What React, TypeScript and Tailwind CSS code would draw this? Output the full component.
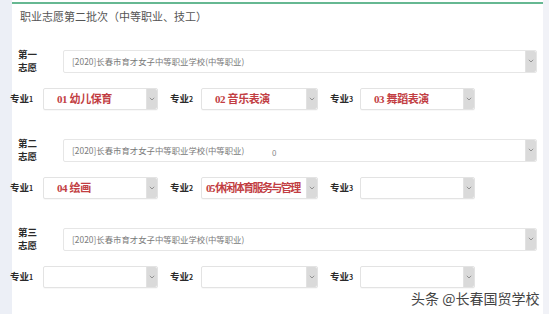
import React from "react";

const sans = "font-['Noto_Sans_CJK_SC','Noto_Sans',sans-serif]";

function Arrow() {
  return (
    <div className="flex w-[11px] shrink-0 items-center justify-center self-stretch rounded-r-[2px] border-l border-[#e2e2e2] bg-[#dadada]">
      <svg width="6" height="4" viewBox="0 0 6 4">
        <path d="M0.8 0.8 L3 3 L5.2 0.8" stroke="#8a8a8a" strokeWidth="0.9" fill="none" />
      </svg>
    </div>
  );
}

function MajorSel({ w, text, small }: { w: string; text?: string; small?: boolean }) {
  return (
    <div className={`flex h-[22px] ${w} items-stretch rounded-[2px] border border-[#e3e3e3] bg-white shadow-[0_1px_1px_rgba(0,0,0,0.03)]`}>
      <div className="flex min-w-0 flex-1 items-center overflow-hidden whitespace-nowrap">
        {text ? (
          <span
            className={`font-['Liberation_Serif','Noto_Sans_CJK_SC',serif] font-bold text-[#c23e43] ${
              small ? "pl-[4px] text-[11px] tracking-[-1.6px]" : "pl-[13px] text-[11px] tracking-[-0.4px]"
            }`}
          >
            {text}
          </span>
        ) : null}
      </div>
      <Arrow />
    </div>
  );
}

function MajorLabel({ n, w }: { n: string; w: string }) {
  return (
    <div className={`${w} shrink-0 ${sans} text-[9.5px] font-bold leading-none text-[#2a2a2a]`}>
      专业<span className="text-[7px]">{n}</span>
    </div>
  );
}

function Section({
  order,
  majors,
  zero,
}: {
  order: string;
  majors: [string?, string?, string?];
  zero?: boolean;
}) {
  return (
    <div className="flex flex-col">
      <div className="flex h-[22px] items-center">
        <div className={`ml-[6px] w-[45px] ${sans} text-[9.5px] font-bold leading-[13px] text-[#2a2a2a]`}>
          <div>第{order}</div>
          <div>志愿</div>
        </div>
        <div className="relative flex h-[23px] w-[474px] items-stretch rounded-[2px] border border-[#e6e6e6] bg-white">
          <div className={`flex flex-1 items-center pl-[8px] ${sans} text-[8.4px] text-[#7a7a7a]`}>
            [2020]长春市育才女子中等职业学校(中等职业)
          </div>
          {zero ? (
            <span className={`absolute left-[208px] top-[9px] ${sans} text-[8px] leading-none text-[#8a8a8a]`}>0</span>
          ) : null}
          <Arrow />
        </div>
      </div>
      <div className="-ml-[2px] mt-[16px] flex h-[22px] items-center">
        <MajorLabel n="1" w="w-[33px]" />
        <MajorSel w="w-[115px]" text={majors[0]} />
        <div className="ml-[12px]">
          <MajorLabel n="2" w="w-[31px]" />
        </div>
        <MajorSel w="w-[117px]" text={majors[1]} small={majors[1] ? majors[1].length > 8 : false} />
        <div className="ml-[12px]">
          <MajorLabel n="3" w="w-[30px]" />
        </div>
        <MajorSel w="w-[115px]" text={majors[2]} />
      </div>
    </div>
  );
}

export default function App() {
  return (
    <div className="relative flex h-[314px] w-[549px] overflow-hidden bg-[#eef0f5]">
      <div className="w-[12px] shrink-0 bg-[#eceff6]" />
      <div className="flex w-[531px] shrink-0 flex-col bg-white pt-[2px]">
        <div className="h-[2px] bg-[#66b892]" />
        <div className={`mt-[5px] pl-[8px] ${sans} text-[11px] leading-[14px] text-[#555]`}>
          职业志愿第二批次（中等职业、技工）
        </div>
        <div className="mt-[27px] flex flex-col gap-[29px]">
          <Section order="一" majors={["01 幼儿保育", "02 音乐表演", "03 舞蹈表演"]} />
          <Section order="二" majors={["04 绘画", "05 休闲体育服务与管理", undefined]} zero />
          <Section order="三" majors={[undefined, undefined, undefined]} />
        </div>
      </div>
      <div className="flex-1 bg-[#f1f2f7]" />
      <div
        className={`absolute left-[411px] top-[289px] ${sans} text-[14px] leading-[18px] text-[#444] [text-shadow:0_0_2px_#fff]`}
      >
        头条 @长春国贸学校
      </div>
    </div>
  );
}
